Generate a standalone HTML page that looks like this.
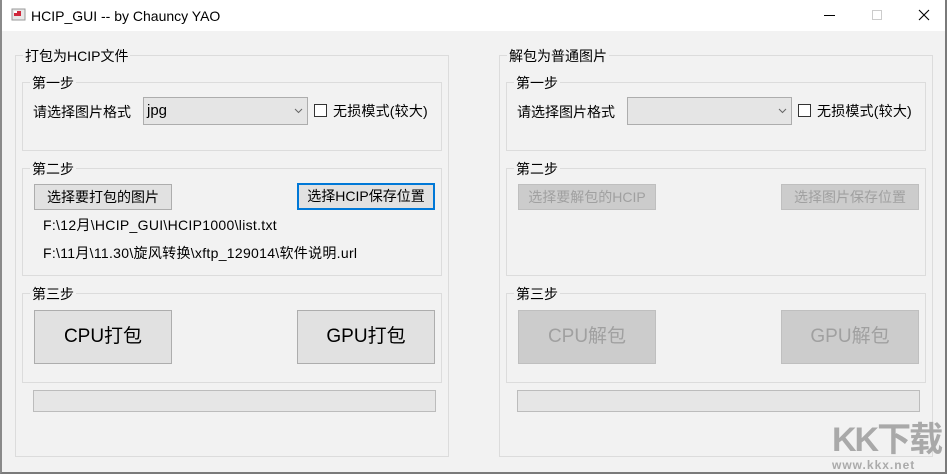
<!DOCTYPE html>
<html><head><meta charset="utf-8"><style>
*{margin:0;padding:0;box-sizing:border-box}
body{width:947px;height:474px;background:#fff;position:relative;overflow:hidden;font-family:"Liberation Sans","Noto Sans CJK SC",sans-serif;font-size:14px;color:#000}
.a{position:absolute}
#win{left:0;top:0;width:947px;height:474px;border-right:2px solid #7a7a7a;border-bottom:2px solid #7a7a7a;border-left:2px solid #8a8a8a}
#tb{left:0;top:0;width:947px;height:31px;background:#fff;border-bottom:0}
#body{left:2px;top:31px;width:943px;height:441px;background:#f2f2f2}
.gb{position:absolute;border:1px solid #dcdcdc}
.gl{position:absolute;background:#f2f2f2;padding:0 2px;font-size:14px;line-height:16px;white-space:nowrap}
.btn{position:absolute;background:#e1e1e1;border:1px solid #adadad;text-align:center;white-space:nowrap}
.dis{background:#cccccc;border-color:#bfbfbf;color:#a0a0a0}
.prog{position:absolute;background:#e6e6e6;border:1px solid #bcbcbc;width:403px;height:22px}
.txt{position:absolute;white-space:nowrap;font-size:14px;line-height:16px}
.combo{position:absolute;width:165px;height:28px;background:#e5e5e5;border:1px solid #adadad;font-size:15px;line-height:26px;padding-left:3px}
.cb{position:absolute;width:13px;height:13px;border:1px solid #333;background:#fff}
</style></head><body>
<div class="a" id="tb">
 <svg class="a" style="left:11px;top:8px" width="16" height="14"><rect x="1" y="1" width="13" height="11" fill="#e8e8e8" stroke="#999"/><rect x="3" y="3" width="7" height="5" fill="#d0283c"/><rect x="3" y="3" width="3" height="2" fill="#fff"/></svg>
 <div class="txt" style="left:31px;top:8px;font-size:14px">HCIP_GUI -- by Chauncy YAO</div>
 <div class="a" style="left:824px;top:15px;width:11px;height:1px;background:#000"></div>
 <div class="a" style="left:872px;top:10px;width:10px;height:10px;border:1px solid #ccc"></div>
 <svg class="a" style="left:918px;top:9px" width="12" height="12"><path d="M1 1L11 11M11 1L1 11" stroke="#000" stroke-width="1.1"/></svg>
</div>
<div class="a" id="body"></div>
<div class="a" id="win"></div>

<!-- left -->
<div class="gb" style="left:15px;top:55px;width:434px;height:402px"></div>
<div class="gl" style="left:23px;top:48px">打包为HCIP文件</div>
<div class="gb" style="left:22px;top:82px;width:420px;height:69px"></div>
<div class="gl" style="left:30px;top:75px">第一步</div>
<div class="txt" style="left:33px;top:104px">请选择图片格式</div>
<div class="combo" style="left:143px;top:97px">jpg</div>
<svg class="a" style="left:294px;top:108px" width="9" height="6"><path d="M1 1L4.5 4.5L8 1" stroke="#666" fill="none"/></svg>
<div class="cb" style="left:314px;top:104px"></div>
<div class="txt" style="left:333px;top:103px;letter-spacing:0.2px">无损模式(较大)</div>

<div class="gb" style="left:22px;top:168px;width:420px;height:108px"></div>
<div class="gl" style="left:30px;top:161px">第二步</div>
<div class="btn" style="left:34px;top:184px;width:138px;height:26px;line-height:24px">选择要打包的图片</div>
<div class="btn" style="left:297px;top:183px;width:138px;height:27px;line-height:23px;border:2px solid #0078d7">选择HCIP保存位置</div>
<div class="txt" style="left:43px;top:217px;letter-spacing:0.3px">F:\12月\HCIP_GUI\HCIP1000\list.txt</div>
<div class="txt" style="left:43px;top:245px;letter-spacing:0.3px">F:\11月\11.30\旋风转换\xftp_129014\软件说明.url</div>

<div class="gb" style="left:22px;top:293px;width:420px;height:90px"></div>
<div class="gl" style="left:30px;top:286px">第三步</div>
<div class="btn" style="left:34px;top:310px;width:138px;height:54px;line-height:52px;font-size:19px">CPU打包</div>
<div class="btn" style="left:297px;top:310px;width:138px;height:54px;line-height:52px;font-size:19px">GPU打包</div>
<div class="prog" style="left:33px;top:390px"></div>

<!-- right -->
<div class="gb" style="left:499px;top:55px;width:434px;height:402px"></div>
<div class="gl" style="left:507px;top:48px">解包为普通图片</div>
<div class="gb" style="left:506px;top:82px;width:420px;height:69px"></div>
<div class="gl" style="left:514px;top:75px">第一步</div>
<div class="txt" style="left:517px;top:104px">请选择图片格式</div>
<div class="combo" style="left:627px;top:97px"></div>
<svg class="a" style="left:778px;top:108px" width="9" height="6"><path d="M1 1L4.5 4.5L8 1" stroke="#666" fill="none"/></svg>
<div class="cb" style="left:798px;top:104px"></div>
<div class="txt" style="left:817px;top:103px;letter-spacing:0.2px">无损模式(较大)</div>

<div class="gb" style="left:506px;top:168px;width:420px;height:108px"></div>
<div class="gl" style="left:514px;top:161px">第二步</div>
<div class="btn dis" style="left:518px;top:184px;width:138px;height:26px;line-height:24px">选择要解包的HCIP</div>
<div class="btn dis" style="left:781px;top:184px;width:138px;height:26px;line-height:24px">选择图片保存位置</div>

<div class="gb" style="left:506px;top:293px;width:420px;height:90px"></div>
<div class="gl" style="left:514px;top:286px">第三步</div>
<div class="btn dis" style="left:518px;top:310px;width:138px;height:54px;line-height:52px;font-size:19px">CPU解包</div>
<div class="btn dis" style="left:781px;top:310px;width:138px;height:54px;line-height:52px;font-size:19px">GPU解包</div>
<div class="prog" style="left:517px;top:390px"></div>

<!-- watermark -->
<div class="txt" style="left:832px;top:422px;font-size:34px;line-height:36px;color:#a9a9a9;font-weight:bold;letter-spacing:-2px">KK下载</div>
<div class="txt" style="left:832px;top:459px;font-size:12px;line-height:12px;color:#aaa;font-weight:bold;letter-spacing:1px">www.kkx.net</div>
</body></html>
